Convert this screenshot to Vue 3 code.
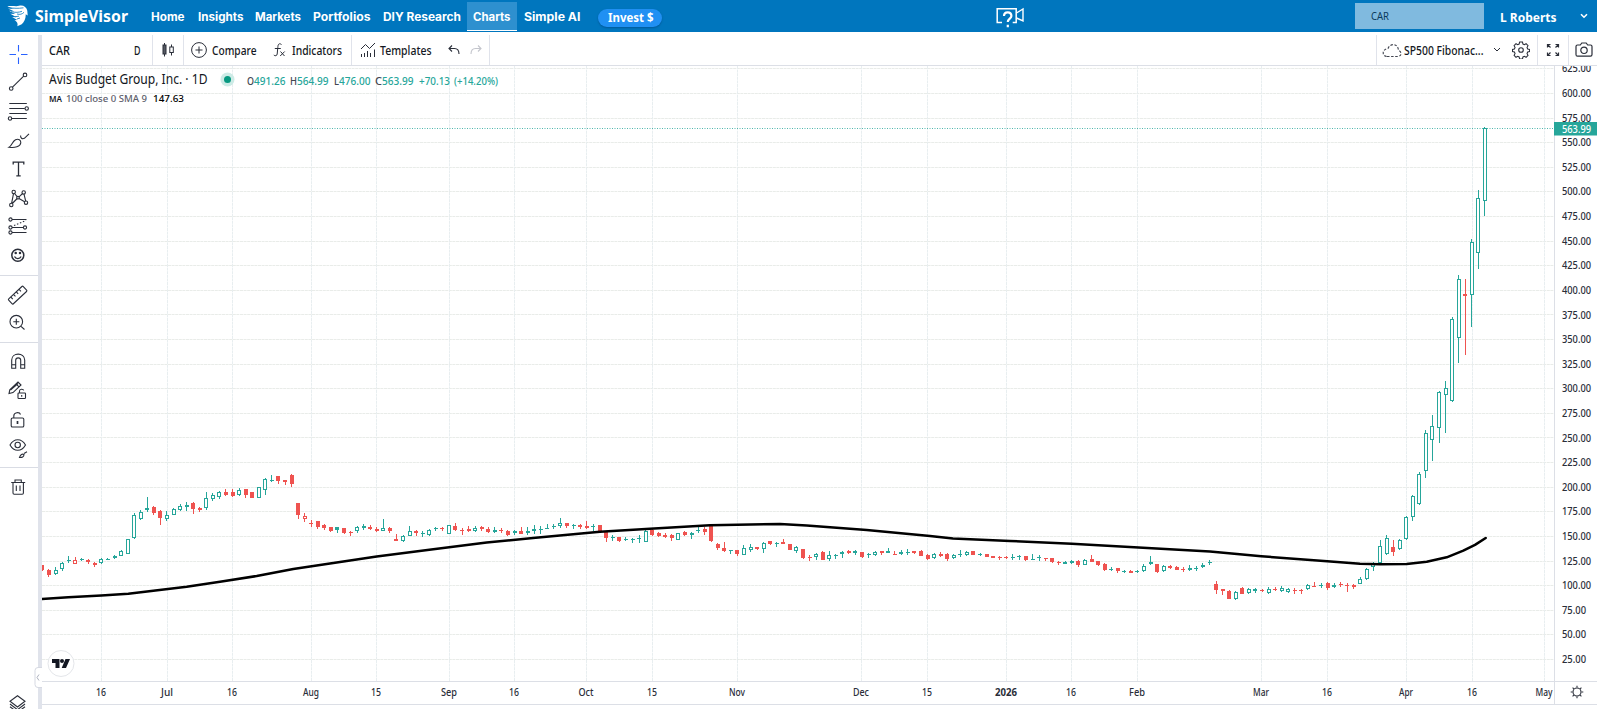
<script setup>
import { h } from 'vue'

// Single line of text fitted to a fixed width
const Fit = (props) =>
  h('svg', { width: props.w, height: 16, overflow: 'visible', class: 'fit' }, [
    h('text', { x: 0, y: 12, fill: 'currentColor', textLength: props.w, lengthAdjust: 'spacingAndGlyphs' }, props.t),
  ])
Fit.props = ['w', 't']

const nav = [
  { t: 'Home', w: 33.5, g: 0 },
  { t: 'Insights', w: 45.5, g: 13.5 },
  { t: 'Markets', w: 46, g: 12.2 },
  { t: 'Portfolios', w: 57.5, g: 12 },
  { t: 'DIY Research', w: 78, g: 12.3 },
]

const groups = [
  ['cross', 'trend', 'fib', 'brush', 'text', 'pattern', 'forecast', 'smile'],
  ['ruler', 'zoomin'],
  ['magnet', 'pencil', 'lock', 'eye'],
  ['trash'],
]

const OX = 42
const OY = 66
const yOf = (p) => 93.4 + (600 - p) * 0.9845 - OY
const prices = Array.from({ length: 25 }, (_, i) => 25 + i * 25).map((p) => ({
  y: Math.floor(yOf(p)) + 0.5,
  ty: yOf(p) + 3.6,
  label: p.toFixed(2),
}))
const months = [
  [101, '16', 10], [167, 'Jul', 12], [232, '16', 10], [311, 'Aug', 16], [376, '15', 10], [449, 'Sep', 16],
  [514, '16', 10], [586, 'Oct', 15], [652, '15', 10], [737, 'Nov', 16], [861, 'Dec', 16], [927, '15', 10],
  [1006, '2026', 22], [1071, '16', 10], [1137, 'Feb', 16], [1261, 'Mar', 16], [1327, '16', 10],
  [1406, 'Apr', 14], [1472, '16', 10], [1544, 'May', 17],
].map(([x, t, w]) => ({ x: x - OX + 0.5, t, w }))

// kind (G/g rising, R/r falling; capital G and r are hollow), high, body top, body bottom, low.
// Values are thirds of a pixel below each run's base.
const runs = [
  [450, `R 346 346 359 362,R 357 360 374 380,G 350 361 371 374,G 337 340 356 363,g 318 331 334 338,r 321 331 341 341,g 323 327 330 333,R 328 329 335 342,R 336 338 345 350,G 324 327 339 341,g 325 326 328 328,G 315 319 325 328,G 301 304 317 318,G 266 268 311 312,G 190 195 263 266,G 180 185 206 209,G 141 174 179 187,R 169 171 188 195,R 181 184 205 225,G 182 196 208 212,G 174 178 196 196,G 162 168 179 182,G 155 166 171 182,R 156 160 177 192,R 171 175 180 186,G 126 145 173 181,G 128 136 148 153,G 122 127 140 148,R 117 125 136 138,R 117 125 137 141,G 114 121 134 137,R 117 118 136 144,R 125 127 144 145,G 110 112 143 144,G 84 88 119 136,g 76 89 92 97,R 77 79 93 102,R 90 91 95 105,R 73 74 103 112,R 159 160 196 208,r 189 199 206 215,R 209 219 222 231,R 213 214 230 236,R 222 225 233 240,R 231 232 243 246,g 231 232 241 250,R 234 235 250 252,R 243 246 250 258,G 228 231 242 248,G 222 227 233 240,R 225 232 237 240,R 231 236 244 246,G 208 233 244 244,R 231 233 242 248,r 252 267 272 272,G 255 259 272 277,G 229 243 257 258,R 241 244 250 257,g 242 250 252 260,G 237 240 255 257,g 231 233 236 244,R 231 233 237 243,G 225 226 251 251,R 219 228 240 243,R 234 240 242 256,R 229 236 243 246,G 228 235 242 245,R 228 231 237 243,R 231 237 246 248,g 231 240 247 250,R 234 239 243 249,R 240 242 255 258,G 240 244 249 256,R 232 243 252 253,G 232 243 250 256,G 225 238 244 251,g 229 238 241 252,g 222 233 236 238,g 222 227 230 236,G 204 220 227 234,R 219 220 228 234,g 222 226 228 236,R 222 226 230 237,R 213 228 234 236,g 222 229 231 243,R 225 226 247 249,R 243 245 265 275`],
  [500, `g 106 112 115 124,R 111 112 122 127,g 112 117 120 124,g 113 118 120 130,g 106 113 116 129,G 85 94 125 127,R 87 90 104 109,R 97 99 108 112,R 99 105 111 113,R 103 105 115 123,G 99 100 119 120,R 93 96 105 108,G 96 99 105 117,g 80 89 93 98,R 82 87 96 105,R 75 76 123 126,R 130 132 145 150,R 127 144 154 155,g 150 151 154 163,R 150 151 163 168,G 136 145 165 166,G 133 140 150 156,R 140 141 147 150,G 126 129 146 158,R 123 123 132 135,g 126 129 132 140,R 116 127 132 132,R 132 133 150 151,G 138 142 154 159,R 147 148 173 177,R 165 170 174 182,G 159 163 172 180,R 153 156 180 181,G 152 166 178 184,g 162 164 165 176,G 152 157 163 173,R 150 154 158 162,G 150 154 158 165,R 156 157 171 174,g 159 162 165 173,G 153 155 165 168,R 153 154 158 165,g 143 154 158 160,R 153 162 164 165,G 150 157 162 165,g 148 155 159 165,R 152 154 158 161,R 150 154 168 169,R 163 165 177 180`],
  [520, `G 98 103 115 117,R 96 103 108 111,R 99 101 116 122,G 102 106 115 118,g 91 103 105 111,G 94 96 104 108,R 93 94 106 106,g 98 103 105 108,R 101 102 111 111,R 108 108 114 115,R 107 112 115 119,R 108 112 115 117,g 102 112 115 119,g 105 109 112 120,R 107 108 121 122,g 102 118 120 121,g 105 112 115 122,R 114 114 118 123,R 113 115 126 129,R 123 127 130 134,g 123 127 131 132,G 120 123 128 133,R 120 123 135 141,G 117 119 135 136,R 105 117 125 125,R 123 124 135 137,R 130 132 150 154,g 142 147 149 154,R 144 145 154 159,g 149 153 156 159,R 149 153 158 158,g 150 153 156 160,G 133 137 153 156,g 109 127 131 135,R 132 133 156 160,G 135 139 154 156,R 136 138 144 146,R 138 142 150 151,R 141 147 150 157,g 136 145 151 154,g 138 143 147 153,G 129 134 142 143,g 121 127 130 134,R 183 192 209 221,R 207 208 212 225,R 210 212 236 238,G 213 215 236 240,R 202 205 221 223,G 205 208 220 222,G 204 206 214 218,R 207 210 214 216`],
  [360, `G 682 687 700 703,R 682 686 691 693,G 678 685 692 697,G 684 686 696 700,R 684 691 693 702,R 687 690 694 702,G 672 674 688 690,R 667 679 681 682,g 670 676 679 684,R 667 670 684 691,G 669 674 682 685,R 666 672 674 681,R 670 674 678 696,R 673 675 681 686,G 652 657 671 673,G 624 626 657 661,G 606 609 621 633,G 541 559 609 613,G 526 535 583 584,R 540 562 575 587,G 537 541 566 570,G 468 472 537 540,G 406 409 472 482,G 337 343 433 434,G 211 219 334 355,G 166 199 240 302,G 93 95 205 248,G 63 85 106 218`],
  [120, `G 591 597 843 845,G 464 477 653 728,R 477 523 528 704,G 357 366 524 621,G 210 234 398 447,G 22 25 242 288`],
]
const candles = runs
  .flatMap(([base, s]) => s.split(',').map((row) => {
    const [k, ...v] = row.trim().split(' ')
    return [k, ...v.map((n) => base - OY + n / 3)]
  }))
  .map(([k, hi, top, bot, lo], i) => {
    const x = 42.4 + i * 6.557
    const t = Math.round(top)
    const b = Math.max(t + 1, Math.round(bot))
    return {
      x: Math.round(x - 2) - OX,
      wx: Math.round(x - 0.5) - OX,
      hi: Math.round(hi),
      lo: Math.max(b, Math.round(lo)),
      t,
      b,
      c: k.toLowerCase() === 'g' ? '#26a69a' : '#ef5350',
      hollow: (k === 'G' || k === 'r') && b - t > 1,
    }
  })

const ma = [
  [40, 599], [68.3, 597.3], [101.3, 595.6], [128.3, 593.8], [153.3, 590.7], [186.7, 586.7], [220, 581.8], [256.7, 576],
  [293.3, 568.9], [330, 563.6], [376.7, 556.5], [433.3, 549.2], [486.7, 542.5], [533, 537.9], [600, 531.7], [650, 528.7],
  [710, 525.3], [780, 524], [806.7, 525.5], [866.7, 530], [930, 536.1], [953, 538.4], [1010, 541], [1071.7, 543.7],
  [1143, 547.7], [1210, 551.4], [1261.3, 556.3], [1327.3, 561.3], [1360, 563.7], [1380, 564.3], [1406.7, 564],
  [1426.7, 561.7], [1446.7, 557.3], [1463.3, 550.7], [1475, 544.9], [1485.7, 538],
].map(([x, y]) => `${x - OX},${y - OY}`).join(' ')
</script>

<template>
  <div class="page">
    <header class="top">
      <svg class="hawk" width="22" height="22" viewBox="0 0 22 22">
        <path fill="#fff" d="M0.300 1.500C5 .2 9 2 12 .8c4-1 7.500 1 8.300 5l.4 4.800-2-1.300c.2 4-1.500 7.500-4 10L10.300 21.200C11.200 18 9.800 16.500 7.500 15.200l2.700-.2-5-3 4.300.3-6.200-3.600 5 .3L2 5.800l5.500.6L1 3.600l6 .3z" />
        <path fill="none" stroke="#0076be" stroke-width=".8" d="M2 2.600c5 .8 9 1 14.500.2M4 6.600c4.500 1.200 8 .8 11-.3M10 9c3 .8 5 .3 7-1.700M8 11.700l4-.5M10 14l3-1" />
      </svg>
      <Fit class="brand" w="93" t="SimpleVisor" />
      <nav class="nav">
        <Fit v-for="n in nav" :key="n.t" :w="n.w" :t="n.t" :style="{ marginLeft: n.g + 'px' }" />
        <span class="active"><Fit w="37.500" t="Charts" /></span>
        <Fit w="56.500" t="Simple AI" />
      </nav>
      <span class="invest"><Fit w="45.500" t="Invest $" /></span>
      <span class="grow"></span>
      <svg class="help" width="30" height="24" viewBox="0 0 30 24" fill="none" stroke="#fff">
        <path stroke-width="1.500" d="M6 18.500H1.200V4.800h19v13.700h-3.500" />
        <path stroke-width="1.400" d="M20.500 9l6.500-4v12l-6.500-3" />
        <path stroke-width="2.200" d="M8 12c0-4.800 7.400-4.800 7.400 0 0 2.600-3.600 2.600-3.600 6M11.800 20.700v2.600" />
      </svg>
      <div class="search"><Fit w="18" t="CAR" /></div>
      <Fit class="user" w="56.500" t="L Roberts" />
      <svg class="usercaret" width="8" height="8" viewBox="0 0 8 8" fill="none" stroke="#fff" stroke-width="1.600"><path d="M1 2.200l3 3 3-3" /></svg>
    </header>

    <div class="body">
      <aside class="side">
        <div v-for="(g, gi) in groups" :key="gi" class="group" :class="'g' + gi">
          <div v-for="n in g" :key="n" class="tool">
            <svg width="28" height="28" viewBox="0 0 28 28" fill="none" stroke="#2a2e39" stroke-width="1.100">
              <path v-if="n === 'cross'" stroke="#2962ff" d="M5.500 14.500H12M17 14.500h6.500M14.500 5v6.500M14.500 17.500V24" />
              <g v-else-if="n === 'trend'"><circle cx="7.200" cy="20.500" r="1.800" /><circle cx="21" cy="6.900" r="1.800" /><path d="M8.500 19.200L19.700 8.200" /></g>
              <g v-else-if="n === 'fib'"><path d="M5.300 6.500h17.500M5.300 11.500h15.500M5.300 16.500h17.500M7.800 21.500h15" /><circle cx="22.700" cy="11.500" r="1.700" /><circle cx="6" cy="21.500" r="1.700" /></g>
              <path v-else-if="n === 'brush'" d="M5 21.300c3-1.500 3-5.500 6.500-7.500 3-1.500 5.500.2 5.300 3-.4 4-6 5.300-11.800 4.500zM16.600 9.500c-.3 2.300 1.500 4 3.800 2.800l4.600-4.500" />
              <path v-else-if="n === 'text'" stroke-width="1.300" d="M9.200 9.500V7.200h10.600V9.500M14.500 7.200v13.500M12.300 20.800h4.400" />
              <g v-else-if="n === 'pattern'"><circle cx="9.700" cy="8" r="1.700" /><circle cx="19.700" cy="8.400" r="1.700" /><circle cx="7.300" cy="21" r="1.700" /><circle cx="22" cy="18.700" r="1.700" /><circle cx="14" cy="13.700" r="1.300" /><path d="M9.500 9.700L7.600 19.300M10.500 9.500l2.700 3.200M8.300 19.500l4.900-5M15 12.800l3.600-3.300M15 14.500l5.600 3.300M20 10.100l1.700 7" /></g>
              <g v-else-if="n === 'forecast'"><circle cx="6.500" cy="7.500" r="1.600" /><circle cx="6.500" cy="15.500" r="1.600" /><circle cx="6.500" cy="20.500" r="1.600" /><circle cx="21" cy="15.500" r="1.600" /><path d="M8 7.500h14.500M8 15.500h11.400M8 20.500h14.500" /><path stroke-dasharray="1.500 1.700" d="M10 13.500L22 8.500" /></g>
              <g v-else-if="n === 'smile'"><circle cx="13.800" cy="14.200" r="6" stroke-width="1.500" /><path stroke-width="1.300" d="M10.500 15.500c1.200 2.800 5.400 2.800 6.600 0" /><circle cx="11.700" cy="12" r=".7" fill="#2a2e39" /><circle cx="16" cy="12" r=".7" fill="#2a2e39" /></g>
              <g v-else-if="n === 'ruler'" transform="rotate(-43 13.500 14)"><rect x="3.500" y="10.800" width="20" height="6.800" rx="1" /><path d="M7.300 11v2.700M11 11v2.700M14.700 11v2.700M18.500 11v2.700" /></g>
              <g v-else-if="n === 'zoomin'"><circle cx="12.300" cy="12.700" r="6.300" /><path d="M17 17.300l3.500 3.200M9.300 12.700h6M12.300 9.700v6" /></g>
              <path v-else-if="n === 'magnet'" d="M7.700 21.300v-8.200c0-8 13-8 13 0v8.200h-4v-8c0-3.200-5-3.200-5 0v8zM7.700 17.800h4M16.700 17.800h4" />
              <g v-else-if="n === 'pencil'"><path d="M5 17.500l.8-3.700L14 6l3 3-8 7.600zM12 7.900l3 3M6.500 14l7.500-6.500" /><rect x="14" y="17" width="7.500" height="5.500" rx=".8" /><path d="M15.500 17v-2c0-2.300 3.800-2.300 4.200-.6M17.700 19v1.700" /></g>
              <g v-else-if="n === 'lock'"><rect x="7.200" y="13" width="12.600" height="9" rx="1.300" /><path d="M9.800 13v-2c0-4 5.800-4.200 6.700-1.500" /><path stroke-width="1.700" d="M13.500 16v3" /></g>
              <g v-else-if="n === 'eye'"><path d="M6 11c4-7 11.500-7 15.500 0-4 7-11.500 7-15.500 0z" /><circle cx="13.700" cy="11" r="2.700" /><path d="M15.500 23.500c1-3 2.700-4 4.500-3 0 2.500-2 3.200-4.500 3zM20 19.500l3-1.700" /></g>
              <path v-else d="M7.200 9.500h14M9 9.500v10.500c0 .8.500 1.200 1.200 1.200h8c.8 0 1.200-.5 1.200-1.200V9.500M11 9.300V7h6.300v2.300M12.300 12.500v5.500M16 12.500v5.500" />
            </svg>
          </div>
        </div>
        <svg class="layers" width="28" height="15" viewBox="0 0 28 15" fill="none" stroke="#2a2e39" stroke-width="1.100">
          <path d="M13.500 1.700L21 7.300 13.500 13 6 7.300zM6 10l7.500 5.700L21 10M6 12.700l7.500 5.700L21 12.700" />
        </svg>
      </aside>
      <div class="rail"><svg class="handle" width="8" height="21" viewBox="0 0 8 21"><path d="M8 .5H4Q1 .5 1 3.500v14q0 3 3 3h4" fill="#fff" stroke="#d6d9e2" /><path d="M5 7.500l-2 3 2 3" fill="none" stroke="#aeb2bf" /></svg></div>

      <main class="main">
        <div class="bar">
          <div class="cell c1"><Fit class="b" w="21" t="CAR" /><Fit class="b" w="6.500" t="D" /></div>
          <div class="cell c2">
            <svg width="14" height="16" viewBox="0 0 14 16" fill="none" stroke="#2a2e39"><rect x="2" y="3" width="3" height="9" fill="#555963" /><path d="M3.500 1v2M3.500 12v2.500M10.500 2.500v2.500M10.500 10.500v3" /><rect x="8.800" y="5" width="3.500" height="5.500" /></svg>
          </div>
          <div class="cell c3">
            <svg width="16" height="16" viewBox="0 0 16 16" fill="none" stroke="#2a2e39"><circle cx="8" cy="8" r="7.400" /><path d="M4.500 8h7M8 4.500v7" /></svg>
            <Fit class="compare" w="44.500" t="Compare" />
            <svg width="13" height="16" viewBox="0 0 13 16" fill="none" stroke="#2a2e39"><path d="M8.500 2.500C5.500.5 5 3 4.800 5.500L4.200 12C4 14 2 14.200.8 13M1.800 6.500h6M7.500 9.500l4 4.500M11.700 9.500l-4.500 4.500" /></svg>
            <Fit class="ind" w="50" t="Indicators" />
          </div>
          <div class="cell c4">
            <svg width="16" height="16" viewBox="0 0 16 16" fill="none" stroke="#2a2e39"><path d="M1 7l4.500-4.500 4 4L15 1M1.500 15v-3M4.500 15v-4M7.500 15V9M10.500 15v-4M14.500 15V7.500" /></svg>
            <Fit class="templ" w="51.500" t="Templates" />
            <svg class="undo" width="12" height="12" viewBox="0 0 12 12" fill="none" stroke="#2a2e39" stroke-width="1.100"><path d="M4 1.500L1 4.500l3 3M1 4.500h5.500c3 0 4.500 2 4.500 5.500" /></svg>
            <svg class="redo" width="12" height="12" viewBox="0 0 12 12" fill="none" stroke="#c3c5cc" stroke-width="1.100"><path d="M8 1.500l3 3-3 3M11 4.500H5.500C2.500 4.500 1 6.500 1 10" /></svg>
          </div>
          <span class="grow"></span>
          <div class="cell c5">
            <svg width="21" height="17" viewBox="0 0 21 17" fill="none" stroke="#40444f" stroke-width="1.100"><path stroke-dasharray="2.500 1.600" d="M5 14.500h10.500c4.500 0 4.500-5 1-6C16 1 8 1 6 6.500 0 7-.5 14 5 14.500z" /></svg>
            <Fit class="layout" w="79.500" t="SP500 Fibonac..." />
            <svg class="caret" width="8" height="6" viewBox="0 0 8 6" fill="none" stroke="#2a2e39"><path d="M1 1l3 3 3-3" /></svg>
            <svg width="18" height="18" viewBox="0 0 18 18" fill="none" stroke="#2a2e39" stroke-width="1.100"><path d="M7.500 1h3l.5 2 1.500.7 1.800-1 2 2-1 1.800.7 1.500 2 .5v2l-2 .5-.7 1.500 1 1.800-2 2-1.800-1-1.500.7-.5 2h-3l-.5-2-1.500-.7-1.800 1-2-2 1-1.800L2 11l-2-.5v-2L2 8l.7-1.500-1-1.800 2-2 1.800 1L7 3z" transform="translate(.5 0) scale(.95 1)" /><circle cx="9" cy="9" r="2.300" /></svg>
          </div>
          <div class="cell c6"><svg width="14" height="14" viewBox="0 0 14 14" fill="none" stroke="#2a2e39" stroke-width="1.200"><path d="M1.500 4.500V1.500h3M1.500 1.500l3 3M9.500 1.500h3v3M12.500 1.500l-3 3M1.500 9.500v3h3M1.500 12.500l3-3M12.500 9.500v3h-3M12.500 12.500l-3-3" /></svg></div>
          <div class="cell c7"><svg width="18" height="16" viewBox="0 0 18 16" fill="none" stroke="#2a2e39" stroke-width="1.200"><path d="M2.500 3h2.800l1.500-2h4.400l1.500 2h2.800q1.500 0 1.500 1.500v8q0 1.700-1.500 1.700h-13Q1 14.200 1 12.500v-8Q1 3 2.500 3z" /><circle cx="9" cy="8.300" r="3.200" /></svg></div>
        </div>

        <div class="chart">
          <svg class="plot" width="1555" height="643" viewBox="0 0 1555 643">
            <g stroke="#e9ece9" stroke-width="1" stroke-dasharray="3 .6">
              <path v-for="p in prices" :key="p.label" :d="`M0 ${p.y}H1512`" />
              <path v-for="(m, i) in months" :key="i" :d="`M${m.x} 0V615`" stroke="#e8eef0" />
            </g>
            <path d="M0 62.500H1512" stroke="#26a69a" stroke-dasharray="1 1.500" opacity=".8" />
            <g shape-rendering="crispEdges">
              <g v-for="(c, i) in candles" :key="i">
                <rect :x="c.wx" :y="c.hi" width="1" :height="Math.max(0, c.t - c.hi)" :fill="c.c" />
                <rect :x="c.wx" :y="c.b" width="1" :height="c.lo - c.b" :fill="c.c" />
                <rect v-if="c.hollow" :x="c.x + 0.5" :y="c.t + 0.5" width="3" :height="c.b - c.t - 1" fill="#fff" :stroke="c.c" />
                <rect v-else :x="c.x" :y="c.t" width="4" :height="c.b - c.t" :fill="c.c" />
              </g>
            </g>
            <polyline :points="ma" fill="none" stroke="#000" stroke-width="2.500" stroke-linejoin="round" stroke-linecap="round" />
            <path d="M1512.500 0V638" stroke="#dcdfe6" />
            <path d="M0 615.500H1555M0 638.500H1555" stroke="#dcdfe6" />
            <g class="axis">
              <text v-for="p in prices" :key="p.label" x="1520" :y="p.ty" :textLength="p.label.length > 5 ? 29 : 24" lengthAdjust="spacingAndGlyphs">{{ p.label }}</text>
              <text v-for="(m, i) in months" :key="i" :x="m.x - 0.5 - m.w / 2" y="630" :textLength="m.w" :class="{ yr: m.t === '2026' }" lengthAdjust="spacingAndGlyphs">{{ m.t }}</text>
              <rect x="1512" y="56" width="43" height="13.500" fill="#26a69a" />
              <text x="1520" y="66.500" fill="#fff" class="tag" textLength="29" lengthAdjust="spacingAndGlyphs">563.99</text>
            </g>
            <g transform="translate(1535 626)" fill="none" stroke="#2a2e39" stroke-width="1.100"><circle r="4" /><path d="M0-4.500V-6.300M0 4.500V6.300M-4.500 0H-6.300M4.500 0H6.300M-3.200-3.200L-4.400-4.400M3.200-3.200L4.400-4.400M-3.200 3.200L-4.400 4.400M3.200 3.200L4.400 4.400" /></g>
            <g transform="translate(19 597.500)"><circle r="13" fill="#fff" stroke="#e4e6ea" /><path fill="#131722" d="M-9-4.500h7.500v9h-4V-.5H-9zM4.500-4.500H9L5 4.500H.7z" /><circle cx="1" cy="-2.500" r="2" fill="#131722" /></g>
          </svg>
          <div class="legend">
            <div class="l1">
              <Fit class="title" w="158.500" t="Avis Budget Group, Inc. · 1D" />
              <span class="dot"></span>
              <span class="ohlc">
                <Fit class="k" w="7" t="O" /><Fit w="31.500" t="491.26" />
                <Fit class="k s" w="7" t="H" /><Fit w="31.500" t="564.99" />
                <Fit class="k s" w="5" t="L" /><Fit w="31.500" t="476.00" />
                <Fit class="k s" w="7" t="C" /><Fit w="31.500" t="563.99" />
                <Fit class="s" w="31" t="+70.13" /><Fit class="p" w="44" t="(+14.20%)" />
              </span>
            </div>
            <div class="l2"><Fit class="mk" w="13" t="MA" /><Fit class="mg" w="81" t="100 close 0 SMA 9" /><Fit class="mv" w="31" t="147.63" /></div>
          </div>
        </div>
      </main>
    </div>
  </div>
</template>

<style>
body { margin: 0; overflow: hidden; }
</style>

<style scoped>
.page { width: 1597px; height: 709px; overflow: hidden; background: #fff; color: #131722; font-family: "Noto Sans", "Open Sans", sans-serif; font-size: 12px; display: flex; flex-direction: column; }
.fit { flex: none; display: block; }
.grow { flex: 1; }
.top { height: 32px; flex: none; background: #0076be; color: #fff; display: flex; align-items: center; font-weight: 700; box-sizing: border-box; padding-left: 7px; }
.hawk { flex: none; margin-top: -1px; }
.brand { margin-left: 6px; font-size: 15.500px; margin-top: 3px; }
.nav { display: flex; align-items: center; margin-left: 22.500px; height: 32px; font-family: "Inter", "Open Sans", sans-serif; font-size: 11.200px; }
.nav .fit { margin-top: 2px; }
.active { background: #2e90cf; height: 29px; width: 50px; box-sizing: border-box; border-bottom: 1px solid #fff; margin: 1px 7px 0 6px; padding-top: 1px; display: flex; align-items: center; justify-content: center; }
.nav .active .fit { margin-top: 0; }
.invest { margin-left: 18px; width: 64px; height: 18px; margin-top: 3px; border-radius: 9px; background: #2090f3; box-shadow: 0 1px 2px #005a9a; display: flex; align-items: center; justify-content: center; }
.help { margin-right: 329px; margin-top: 0; }
.search { width: 129px; height: 26px; background: #80badf; color: #0a3a5c; font-weight: 400; font-size: 11px; display: flex; align-items: center; padding-left: 16px; box-sizing: border-box; }
.user { margin-left: 16px; margin-top: 3px; font-size: 11.500px; }
.usercaret { margin-left: 24px; margin-right: 9px; }
.body { flex: 1; display: flex; min-height: 0; }
.side { width: 38px; flex: none; padding-top: 2px; display: flex; flex-direction: column; box-sizing: border-box; overflow: hidden; }
.group { padding: 5.200px 0; border-bottom: 1px solid #d9dce4; flex: none; }
.group.g1 { padding: 4.800px 0 5.200px; }
.group.g1 .tool { height: 28px; }
.group.g2 { padding: 4px 0 5px; }
.group.g3 { padding-top: 4.500px; border-bottom: 0; }
.tool { height: 28.800px; display: flex; align-items: center; padding-left: 4px; }
.layers { margin: auto 0 0 4px; flex: none; }
.rail { width: 4px; margin-top: 3px; background: #e0e3eb; flex: none; position: relative; }
.handle { position: absolute; left: -4px; top: 632px; }
.main { flex: 1; min-width: 0; display: flex; flex-direction: column; }
.bar { height: 34px; flex: none; box-sizing: border-box; border-bottom: 1px solid #dcdfe6; padding-top: 3px; display: flex; }
.cell { display: flex; align-items: center; box-sizing: border-box; border-right: 1px solid #e0e3eb; }
.cell svg { flex: none; }
.c1 { width: 111px; padding: 0 12px 0 7px; justify-content: space-between; }
.c2 { width: 31px; justify-content: center; }
.c3 { width: 168px; padding-left: 7px; }
.cell .fit { font-weight: 500; margin-top: 1px; }
.compare { margin: 0 16px 0 5px; }
.ind { margin-left: 6px; }
.c4 { width: 138px; padding-left: 8px; }
.templ { margin: 0 16px 0 4px; }
.redo { margin-left: 10px; }
.c5 { width: 162px; border-left: 1px solid #e0e3eb; padding-left: 5px; }
.layout { margin: 0 9px 0 1px; }
.caret { margin-right: 11px; }
.c6 { width: 31px; justify-content: center; }
.c7 { width: 28px; border: 0; padding-left: 6px; }
.chart { flex: 1; position: relative; min-height: 0; }
.plot { display: block; }
.axis { font-size: 10px; fill: #2a2e39; font-weight: 500; }
.yr { font-weight: 700; }
.tag { fill: #fff; }
.legend { position: absolute; left: 7px; top: 5px; }
.l1 { display: flex; align-items: center; height: 16px; }
.title { font-size: 13.500px; margin-top: 1px; }
.dot { width: 7px; height: 7px; border-radius: 50%; background: #089981; box-shadow: 0 0 0 3.500px #cdebe6; margin: 0 16px 0 16px; }
.ohlc { display: flex; font-size: 10.500px; color: #26a69a; font-weight: 500; margin-top: 3px; }
.k { color: #434651; }
.s { margin-left: 5px; }
.p { margin-left: 4px; }
.l2 { display: flex; margin-top: 2.500px; font-size: 9.500px; }
.mk { font-weight: 600; }
.mg { color: #5d606b; margin: 0 6px 0 4px; font-weight: 500; }
.mv { font-weight: 500; color: #000; }
</style>
